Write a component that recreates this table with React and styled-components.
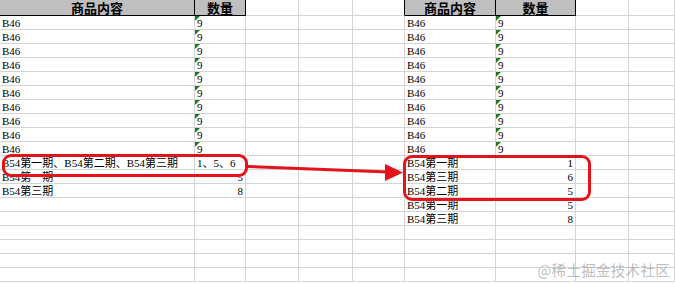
import React from 'react';
import styled, { createGlobalStyle } from 'styled-components';

const GlobalStyle = createGlobalStyle`
  html, body {
    margin: 0;
    padding: 0;
    background: #fff;
  }
`;

const columnas = [195, 51, 53, 54, 52, 91, 80, 53, 46];
const GRADE = '#d4d4d4';
const VERMELHO = '#e3131b';

const Tela = styled.div`
  position: relative;
  width: 675px;
  height: 284px;
  overflow: hidden;
  background: #fff;
  font-family: "Liberation Serif", "Noto Sans CJK SC", serif;
  font-size: 11px;
  color: #000;
`;

const Planilha = styled.div`
  display: grid;
  grid-template-columns: ${columnas.map((c) => `${c}px`).join(' ')};
  grid-template-rows: 16px repeat(19, 14px);
`;

const Celula = styled.div`
  position: relative;
  box-sizing: border-box;
  border-right: 1px solid ${(p) => (p.$bordaDir ? '#000' : GRADE)};
  border-bottom: 1px solid ${(p) => (p.$bordaBaixo ? '#000' : GRADE)};
  padding: 1px 2px 0;
  line-height: 13px;
  white-space: nowrap;
  overflow: visible;
  text-align: ${(p) => p.$alinhar || 'left'};

  ${(p) =>
    p.$flag &&
    `
    &::before {
      content: '';
      position: absolute;
      top: 0;
      left: 0;
      border-top: 5px solid #1f7a22;
      border-right: 5px solid transparent;
    }
  `}
`;

const Cabecalho = styled(Celula)`
  padding: 0 2px;
  background: ${(p) => (p.$cinza ? '#bfbfbf' : 'transparent')};
  font-family: "Noto Sans CJK SC", sans-serif;
  font-weight: 700;
  font-size: 13px;
  line-height: 15px;
  text-align: center;
`;

const Contorno = styled.div`
  position: absolute;
  box-sizing: border-box;
  border: 3px solid ${VERMELHO};
  border-radius: 9px;
`;

const Seta = styled.svg`
  position: absolute;
  left: 0;
  top: 0;
  pointer-events: none;
`;

const MarcaDagua = styled.div`
  position: absolute;
  right: 5px;
  bottom: 4px;
  font-family: "Noto Sans CJK SC", sans-serif;
  font-size: 14.5px;
  color: rgba(160, 160, 160, 0.7);
  letter-spacing: 0.3px;
`;

const B46 = Array.from({ length: 10 }, () => ({ a: 'B46', b: '9', texto: true }));

const esquerda = [
  ...B46,
  { a: 'B54第一期、B54第二期、B54第三期', b: '1、5、6', texto: true, semFlag: true },
  { a: 'B54第一期', b: '5' },
  { a: 'B54第三期', b: '8' },
];

const direita = [
  ...B46,
  { a: 'B54第一期', b: '1' },
  { a: 'B54第三期', b: '6' },
  { a: 'B54第二期', b: '5' },
  { a: 'B54第一期', b: '5' },
  { a: 'B54第三期', b: '8' },
];

const TOTAL_LINHAS = 19;

const ValorCelula = ({ item }) => {
  if (!item) return <Celula />;
  return (
    <Celula $alinhar={item.texto ? 'left' : 'right'} $flag={item.texto && !item.semFlag}>
      {item.b}
    </Celula>
  );
};

const App = () => {
  const linhas = Array.from({ length: TOTAL_LINHAS }, (_, i) => i);

  return (
    <>
      <GlobalStyle />
      <Tela>
        <Planilha>
          <Cabecalho $cinza $bordaDir $bordaBaixo>商品内容</Cabecalho>
          <Cabecalho $cinza $bordaDir $bordaBaixo>数量</Cabecalho>
          <Cabecalho />
          <Cabecalho />
          <Cabecalho $bordaDir />
          <Cabecalho $cinza $bordaDir $bordaBaixo>商品内容</Cabecalho>
          <Cabecalho $cinza $bordaDir $bordaBaixo>数量</Cabecalho>
          <Cabecalho />
          <Cabecalho />

          {linhas.map((i) => {
            const e = esquerda[i];
            const d = direita[i];
            return (
              <React.Fragment key={i}>
                <Celula>{e ? e.a : ''}</Celula>
                <ValorCelula item={e} />
                <Celula />
                <Celula />
                <Celula />
                <Celula>{d ? d.a : ''}</Celula>
                <ValorCelula item={d} />
                <Celula />
                <Celula />
              </React.Fragment>
            );
          })}
        </Planilha>

        <Contorno style={{ left: 2, top: 154, width: 246, height: 23 }} />
        <Contorno style={{ left: 403, top: 155, width: 188, height: 46 }} />

        <Seta width="675" height="284" viewBox="0 0 675 284">
          <polygon points="247,165 388,170.5 388,173.5 247,168" fill={VERMELHO} />
          <polygon points="403,172.5 385,164 385,181" fill={VERMELHO} />
        </Seta>

        <MarcaDagua>@稀土掘金技术社区</MarcaDagua>
      </Tela>
    </>
  );
};

export default App;
